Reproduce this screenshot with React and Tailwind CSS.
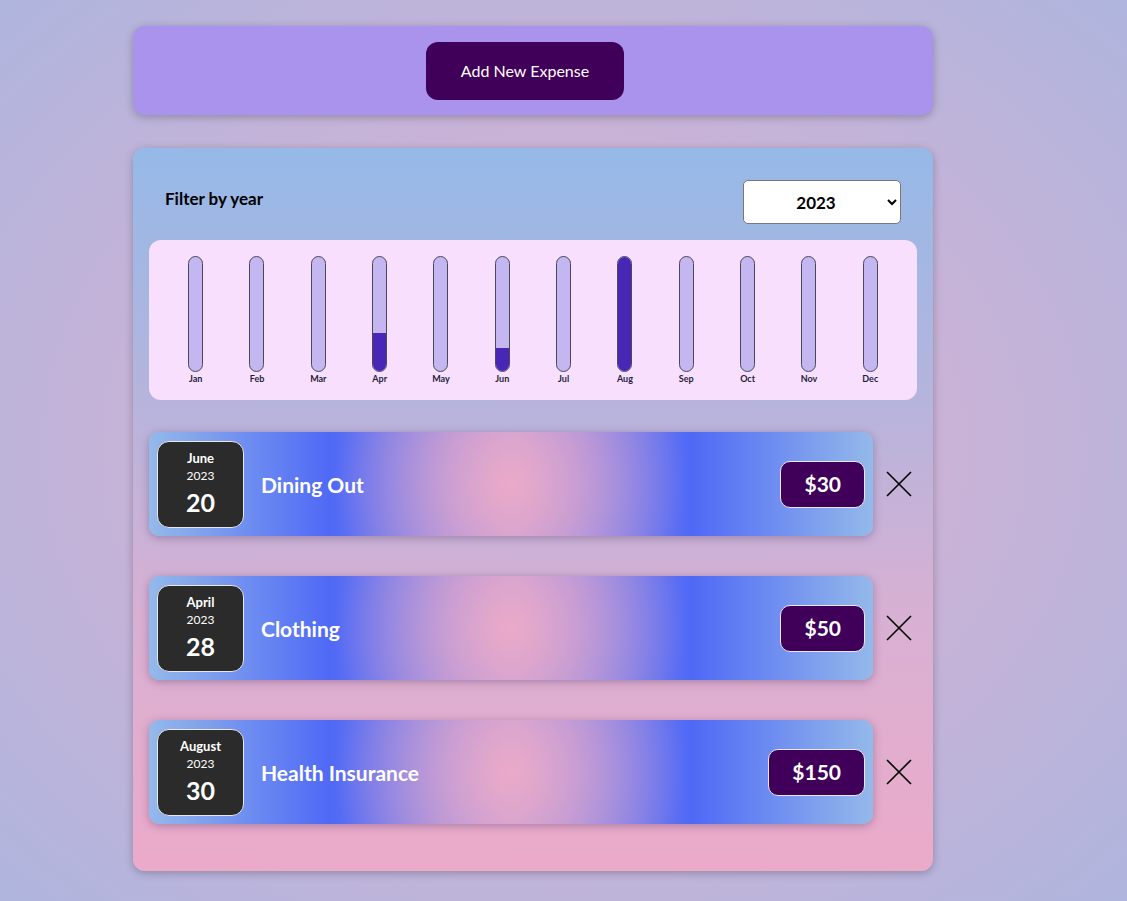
import React from "react";

const months = [
  ["Jan", 0], ["Feb", 0], ["Mar", 0], ["Apr", 33], ["May", 0], ["Jun", 20],
  ["Jul", 0], ["Aug", 100], ["Sep", 0], ["Oct", 0], ["Nov", 0], ["Dec", 0],
];

const expenses = [
  { month: "June", year: "2023", day: "20", title: "Dining Out", amount: "$30" },
  { month: "April", year: "2023", day: "28", title: "Clothing", amount: "$50" },
  { month: "August", year: "2023", day: "30", title: "Health Insurance", amount: "$150" },
];

function ChartBar({ label, fill }) {
  return (
    <div className="flex flex-1 flex-col items-center">
      <div className="relative h-[116px] w-[15px] overflow-hidden rounded-full border border-[#4a4a55] bg-[#c3b6f1]">
        <div className="absolute bottom-0 left-0 w-full bg-[#4827b6]" style={{ height: `${fill}%` }} />
      </div>
      <span className="text-[9px] font-bold leading-[14px] text-[#1e1e3a]">{label}</span>
    </div>
  );
}

function ExpenseItem({ item }) {
  return (
    <div className="flex items-center">
      <div className="flex h-[104px] w-[724px] items-center rounded-[10px] bg-[radial-gradient(circle_at_50%_50%,#eaaac9_0%,rgba(234,170,201,0)_48%),linear-gradient(90deg,#94b9ea_0%,#4f69f6_25%,#b49ad9_50%,#4f69f6_75%,#94b9ea_100%)] px-2 shadow-[0_2px_8px_rgba(60,40,90,0.35)]">
        <div className="flex h-[87px] w-[87px] flex-col items-center justify-center rounded-[12px] border border-[#e8e8e8] bg-[#2b2b2b] text-white">
          <span className="text-[13px] font-bold leading-[17px]">{item.month}</span>
          <span className="text-[12px] leading-[17px]">{item.year}</span>
          <span className="mt-[2px] text-[25px] font-bold leading-[32px]">{item.day}</span>
        </div>
        <h2 className="ml-[17px] mt-[2px] flex-1 text-[21px] font-bold text-white">{item.title}</h2>
        <div className="flex h-[47px] items-center rounded-[10px] border border-[#e8e8f0] bg-[#40005a] px-[23px] text-[21px] font-bold text-white">
          {item.amount}
        </div>
      </div>
      <svg className="ml-[13px] h-[26px] w-[26px]" viewBox="0 0 26 26" fill="none" stroke="#000" strokeWidth="1.6">
        <path d="M1 1L25 25M25 1L1 25" />
      </svg>
    </div>
  );
}

export default function App() {
  return (
    <div className="min-h-screen bg-[radial-gradient(ellipse_at_50%_50%,#deb0cf_0%,#cbb2d6_45%,#afb5de_100%)] pb-[30px] pt-[26px] font-['Lato',sans-serif]">
      <div className="ml-[133px] w-[800px]">
        <div className="flex justify-center rounded-[12px] bg-[#a993ec] pb-[15px] pr-4 pt-4 shadow-[0_2px_8px_rgba(0,0,0,0.25)]">
          <button className="h-[58px] w-[198px] rounded-[12px] bg-[#40005a] text-[16px] text-white">
            Add New Expense
          </button>
        </div>

        <div className="mt-[33px] rounded-[12px] bg-[linear-gradient(180deg,#95b9e8_0%,#b6b4dc_35%,#d8b0d3_65%,#ecaac9_100%)] px-4 pb-[47px] pt-8 shadow-[0_2px_8px_rgba(0,0,0,0.25)]">
          <div className="flex items-center justify-between px-4">
            <span className="pb-[6px] text-[17px] font-bold text-black">Filter by year</span>
            <select className="h-[44px] w-[158px] rounded-[5px] border border-[#777] bg-white px-3 text-center text-[17px] font-bold text-black">
              <option>2023</option>
              <option>2022</option>
              <option>2021</option>
            </select>
          </div>

          <div className="mt-4 flex rounded-[12px] bg-[#f8dffe] px-4 pb-[14px] pt-4">
            {months.map(([label, fill]) => (
              <ChartBar key={label} label={label} fill={fill} />
            ))}
          </div>

          <div className="mt-8 flex flex-col gap-10">
            {expenses.map((item) => (
              <ExpenseItem key={item.title} item={item} />
            ))}
          </div>
        </div>
      </div>
    </div>
  );
}
